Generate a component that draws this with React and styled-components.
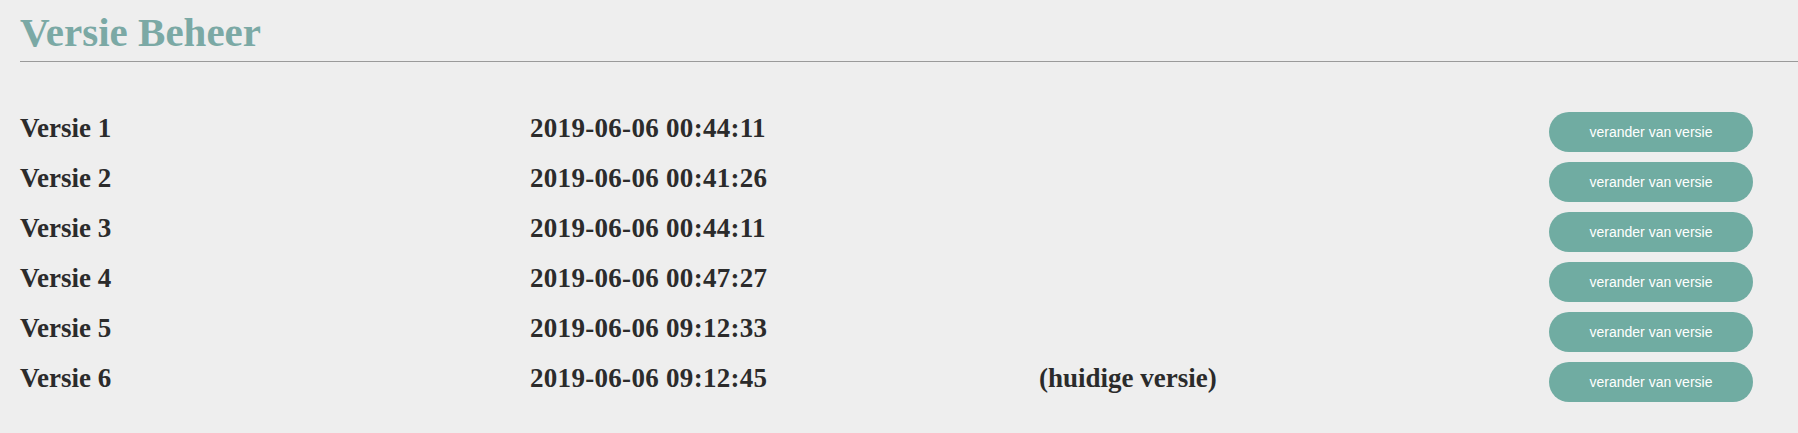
import React from 'react'
import styled, { createGlobalStyle } from 'styled-components'

const GlobalStyle = createGlobalStyle`
  body {
    margin: 0;
    background-color: #eeeeee;
    font-family: "Liberation Serif", serif;
  }
`

const Page = styled.div`
  padding-left: 20px;
  min-height: 433px;
  box-sizing: border-box;
`

const Title = styled.h1`
  margin: 0;
  padding: 8px 0 4px;
  font-size: 41px;
  line-height: 49px;
  font-weight: 700;
  color: #7ba9a5;
  border-bottom: 1px solid #9a9a9a;
`

const List = styled.div`
  margin-top: 45px;
  display: flex;
  flex-direction: column;
`

const Row = styled.div`
  display: grid;
  grid-template-columns: 510px 509px 510px 204px;
  align-items: center;
  height: 50px;
`

const Cell = styled.div`
  font-size: 27px;
  font-weight: 700;
  color: #2b2b2b;
  padding-bottom: 8px;
  letter-spacing: ${p => (p.wide ? '0.3px' : '0')};
`

const Button = styled.button`
  width: 204px;
  height: 40px;
  border: none;
  border-radius: 20px;
  background-color: #70aca2;
  color: white;
  font-family: "Liberation Sans", Arial, sans-serif;
  font-size: 14px;
  cursor: pointer;
`

const versions = [
  { name: 'Versie 1', date: '2019-06-06 00:44:11' },
  { name: 'Versie 2', date: '2019-06-06 00:41:26' },
  { name: 'Versie 3', date: '2019-06-06 00:44:11' },
  { name: 'Versie 4', date: '2019-06-06 00:47:27' },
  { name: 'Versie 5', date: '2019-06-06 09:12:33' },
  { name: 'Versie 6', date: '2019-06-06 09:12:45', current: true },
]

const App = () => {
  return (
    <Page>
      <GlobalStyle />
      <Title>Versie Beheer</Title>
      <List>
        {versions.map(v => (
          <Row key={v.name}>
            <Cell>{v.name}</Cell>
            <Cell wide>{v.date}</Cell>
            <Cell>{v.current ? '(huidige versie)' : ''}</Cell>
            <Button>verander van versie</Button>
          </Row>
        ))}
      </List>
    </Page>
  )
}

export default App
